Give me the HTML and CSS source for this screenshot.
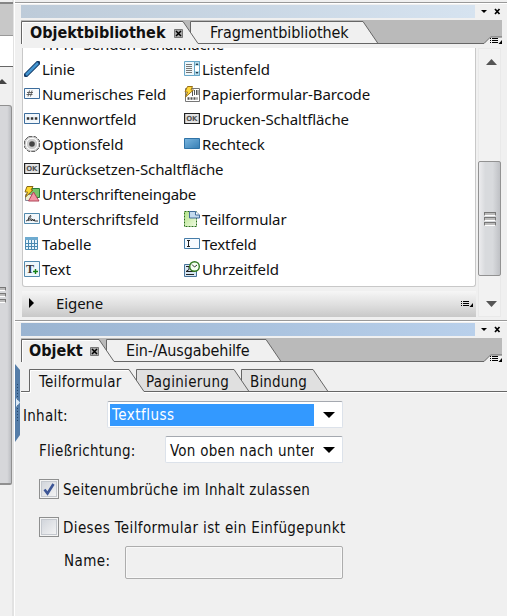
FILE: index.html
```html
<!DOCTYPE html>
<html lang="de">
<head>
<meta charset="utf-8">
<title>Objektbibliothek</title>
<link rel="stylesheet" href="styles.css">
</head>
<body>
<div class="app">
  <aside class="canvas-edge">
    <div class="edge-tab"></div>
    <div class="edge-page"></div>
    <div class="edge-arrow"><svg width="7" height="5"><path d="M-3 5L2 0L7 5Z" fill="#444"/></svg></div>
    <div class="edge-thumb"><i></i><i></i><i></i></div>
  </aside>
  <main class="dock">
    <section class="panel library">
      <header class="titlebar">
        <div class="title-fill fill-pale"></div>
        <svg class="title-tools" width="28" height="13"><path d="M6 5h6l-3 3Z"/><path d="M20 4l4.500 5M24.500 4L20 9" stroke="#000" stroke-width="1.700"/></svg>
      </header>
      <nav class="tabs">
        <svg class="tab-shape" width="481" height="24" fill="none">
          <path fill="#bababa" d="M0 0H481V24H0Z"/>
          <path fill="#f0f0f0" d="M0 1.500H162L169.500 12V1.500H342L357 23.500H463L469 17H481V24H0Z"/>
          <path stroke="#666" d="M.5 24V1.500H162L177 23.500H463L469.500 17H481M169.500 12V1.500H342L357 23.500"/>
          <path stroke="#fff" d="M1.500 24V2.500H161"/>
        </svg>
        <b class="tab-name lib-name">Objektbibliothek</b>
        <svg class="close" width="9" height="9"><path fill="#aaa" stroke="#777" d="M.5.5h8v8h-8z"/><path stroke="#000" stroke-width="1.500" d="M2 2l5 5M7 2L2 7"/></svg>
        <span class="tab-name frag-name">Fragmentbibliothek</span>
        <svg class="menu" width="12" height="7"><path stroke="#000" d="M0 1.500h1M0 3.500h1M0 5.500h1M2 1.500h6M2 3.500h6M2 5.500h6"/><path d="M12 3v4H8.500Z"/></svg>
      </nav>
      <div class="library-body">
        <div class="library-main">
          <div class="items">
            <div class="item wide"><span class="icon"></span><span>HTTP-Senden-Schaltfläche</span></div>
            <div class="item"><svg class="icon" viewBox="0 0 16 16"><path d="M2 14L14 2" stroke="#163c68" stroke-width="4.500" stroke-linecap="square"/><path d="M2 14L14 2" stroke="#4495d0" stroke-width="2.500"/></svg><span>Linie</span></div>
            <div class="item"><svg class="icon" viewBox="0 0 16 16"><path fill="#eef7fb" stroke="#67a6c8" d="M.5.5h15v14H.5z"/><path stroke="#777" d="M2 3.500h6M2 5.500h6M2 7.500h6M2 9.500h6M2 11.500h6"/><path fill="#b6ddea" stroke="#67a6c8" d="M10.500.5h5v14h-5z"/><path fill="#fff" d="M11 5h4v5h-4z"/><path d="M11.500 4L13 2l1.500 2ZM11.500 11l1.500 2 1.500-2Z" fill="#234"/></svg><span>Listenfeld</span></div>
            <div class="item"><svg class="icon" viewBox="0 0 16 16"><path fill="#f7fafc" stroke="#3d6d9c" d="M.5 2.500h15v10H.5z"/><path stroke="#555" stroke-width=".9" d="M3 6.500h6M2.500 8.500h6M5.500 4.500L4 10.500M8 4.500L6.500 10.500"/></svg><span>Numerisches Feld</span></div>
            <div class="item"><svg class="icon" viewBox="0 0 16 16"><path fill="#fff" stroke="#777" d="M1.500 2.500h14v13h-14z"/><path stroke="#555" d="M8.500 4v6M10.500 4v5M12.500 4v5M14 4v5"/><path stroke="#555" stroke-width="2.500" stroke-dasharray="2 1" d="M3.500 12.500h10"/><path fill="#ffd83b" stroke="#98701a" d="M3.500.5h5L7 4h2.500L1.500 11l2-5H1Z"/></svg><span>Papierformular-Barcode</span></div>
            <div class="item"><svg class="icon" viewBox="0 0 16 16"><path fill="#f2f7fb" stroke="#3d6d9c" d="M.5 2.500h15v10H.5z"/><path stroke="#333" stroke-width="2.500" stroke-dasharray="2.500 1.500" d="M2.800 7.500h10.500"/></svg><span>Kennwortfeld</span></div>
            <div class="item"><svg class="icon" viewBox="0 0 16 16"><path fill="#e4e4e4" stroke="#222" stroke-width="1.200" d="M.6 2.500h14.800v10H.6z"/><text x="2.200" y="10" class="ok">OK</text></svg><span>Drucken-Schaltfläche</span></div>
            <div class="item"><svg class="icon" viewBox="0 0 16 16"><path d="M4.500.7h7l3.800 3.800v7l-3.800 3.800h-7L.7 11.500v-7Z" fill="#ddd" stroke="#444" stroke-dasharray="4 1"/><circle cx="8" cy="8" r="5.700" fill="#ccc" stroke="#fff"/><circle cx="8" cy="8" r="2.800" fill="#444"/></svg><span>Optionsfeld</span></div>
            <div class="item"><svg class="icon" viewBox="0 0 16 16"><defs><linearGradient id="blue" x2="1" y2="1"><stop stop-color="#7bb6df"/><stop offset="1" stop-color="#357eb4"/></linearGradient></defs><path fill="url(#blue)" stroke="#2f73a7" d="M.5 2.500h15v10H.5z"/></svg><span>Rechteck</span></div>
            <div class="item wide"><svg class="icon" viewBox="0 0 16 16"><path fill="#e4e4e4" stroke="#222" stroke-width="1.200" d="M.6 2.500h14.800v10H.6z"/><text x="2.200" y="10" class="ok">OK</text></svg><span>Zurücksetzen-Schaltfläche</span></div>
            <div class="item wide"><svg class="icon" viewBox="0 0 16 16"><path fill="#77c46a" stroke="#287e3a" d="M5.500 2.500h10v9h-10z"/><path fill="#eec" stroke="#889" d="M1.500 8.500h7v6h-7z"/><path fill="#f295a4" stroke="#b04458" d="M9.500 6l5.500 9H4.500Z"/><path fill="#ffd82e" stroke="#876817" d="M3 .5h6L7 4h2L1.500 11l2-5H1Z"/></svg><span class="t-ueing">Unterschrifteneingabe</span></div>
            <div class="item"><svg class="icon" viewBox="0 0 16 16"><path fill="#f2f7fb" stroke="#5189ac" d="M.5 2.500h15v10H.5z"/><path fill="none" stroke="#222" stroke-width=".9" d="M2 10C5 9 8 4.500 6.500 4.500S3.500 10 4.500 10L7 7.500v2.500l2-2v2l1.500-1.500V10H14"/></svg><span>Unterschriftsfeld</span></div>
            <div class="item"><svg class="icon" viewBox="0 0 16 16"><defs><linearGradient id="leaf" x2="1" y2="1"><stop stop-color="#b4e488"/><stop offset="1" stop-color="#f0fae4"/></linearGradient></defs><path fill="url(#leaf)" stroke="#286f19" stroke-dasharray="2 1" d="M.5.5h12v15H.5z"/><path fill="#c3daee" stroke="#426d9a" d="M5.500.5h6l4 3.500v3h-10z"/><path d="M11.500.5v3.500h4" fill="#fff" stroke="#426d9a"/></svg><span>Teilformular</span></div>
            <div class="item"><svg class="icon" viewBox="0 0 16 16"><path fill="#e7f4fb" stroke="#4a8ab1" d="M1.500 1.500h12v12h-12z"/><path fill="#6eabd0" d="M1 1h13v3H1z"/><path stroke="#4a8ab1" d="M4.500 4v10M7.500 4v10M10.500 4v10M1 7.500h13M1 10.500h13"/></svg><span class="t-tab">Tabelle</span></div>
            <div class="item"><svg class="icon" viewBox="0 0 16 16"><path fill="#f5faff" stroke="#467da9" d="M.5 2.500h15v10H.5z"/><path stroke="#222" d="M3 4.500h3M3 10.500h3M4.500 4v7"/></svg><span>Textfeld</span></div>
            <div class="item"><svg class="icon" viewBox="0 0 16 16"><path fill="#eef7fb" stroke="#5289ad" d="M.5.5h15v15H.5z"/><text x="2" y="12" class="tee">T</text><path stroke="#148014" stroke-width="1.400" d="M9 10.500h5M11.500 8v5"/></svg><span class="t-tab">Text</span></div>
            <div class="item"><svg class="icon" viewBox="0 0 16 16"><path fill="#d7e6f2" stroke="#47739a" d="M.5 3.500h12v12H.5z"/><path fill="none" stroke="#222" d="M2 5.500h3v3L2 10.500h8M2 13.500h8"/><circle cx="10.500" cy="5.500" r="4.800" fill="#f4fff0" stroke="#327a20" stroke-width="1.400"/><path fill="none" stroke="#333" d="M8 3.500l2.500 2.500L13 4"/></svg><span>Uhrzeitfeld</span></div>
          </div>
          <div class="own"><svg width="6" height="10"><path d="M0 0L5 5L0 10Z"/></svg><span>Eigene</span><svg class="own-menu" width="12" height="7"><path stroke="#000" d="M0 1.500h1M0 3.500h1M0 5.500h1M2 1.500h6M2 3.500h6M2 5.500h6"/><path d="M12 3v4H8.500Z"/></svg></div>
        </div>
        <div class="scroll">
          <svg class="up" width="11" height="6"><path d="M0 6L5.500 0L11 6Z" fill="#555"/></svg>
          <div class="thumb"><i></i><i></i><i></i></div>
          <svg class="down" width="11" height="6"><path d="M0 0H11L5.500 6Z" fill="#555"/></svg>
        </div>
      </div>
    </section>
    <section class="panel object">
      <header class="titlebar">
        <div class="title-fill fill-blue"></div>
        <svg class="title-tools" width="28" height="13"><path d="M6 5h6l-3 3Z"/><path d="M20 4l4.500 5M24.500 4L20 9" stroke="#000" stroke-width="1.700"/></svg>
      </header>
      <nav class="tabs">
        <svg class="tab-shape" width="481" height="24" fill="none">
          <path fill="#bababa" d="M0 0H481V24H0Z"/>
          <path fill="#f0f0f0" d="M0 1.500H78L85.500 12V1.500H245L260 23.500H463L469 17H481V24H0Z"/>
          <path stroke="#666" d="M.5 24V1.500H78L93 23.500H463L469.500 17H481M85.500 12V1.500H245L260 23.500"/>
          <path stroke="#fff" d="M1.500 24V2.500H77"/>
        </svg>
        <b class="tab-name obj-name">Objekt</b>
        <svg class="close" width="9" height="9"><path fill="#aaa" stroke="#777" d="M.5.5h8v8h-8z"/><path stroke="#000" stroke-width="1.500" d="M2 2l5 5M7 2L2 7"/></svg>
        <span class="tab-name help-name">Ein-/Ausgabehilfe</span>
        <svg class="menu" width="12" height="7"><path stroke="#000" d="M0 1.500h1M0 3.500h1M0 5.500h1M2 1.500h6M2 3.500h6M2 5.500h6"/><path d="M12 3v4H8.500Z"/></svg>
      </nav>
      <nav class="subtabs">
        <svg class="tab-shape" width="486" height="24" fill="none">
          <path fill="#e0e0e0" d="M115.500.5H213L220.500 12V.5H292L307 22.500H123L115.500 12Z"/>
          <path stroke="#666" d="M0 22.500H8.500V.5H108L123 22.500H486M115.500 11V.5H213L228 22.500M220.500 11V.5H292L307 22.500"/>
          <path stroke="#fff" d="M0 23.500H9.500V1.500H107M123 23.500H486"/>
        </svg>
        <span class="s-teil">Teilformular</span><span class="s-pag">Paginierung</span><span class="s-bind">Bindung</span>
      </nav>
      <svg class="splitter" width="6" height="78"><path fill="#557da8" d="M0 0L5 6V71L0 78Z"/><path stroke="#23476d" stroke-dasharray="1 2" d="M2.500 20V58"/><path fill="#dceaf7" d="M1 34L5 38.500L1 43Z"/></svg>
      <form class="form">
        <div class="row content-row"><label>Inhalt:</label><div class="select big"><span class="selected">Textfluss</span><svg width="13" height="6"><path d="M0 0H12L6 6Z"/></svg></div></div>
        <div class="row flow-row"><label>Fließrichtung:</label><div class="select small"><span class="value">Von oben nach unten</span><svg width="13" height="6"><path d="M0 0H12L6 6Z"/></svg></div></div>
        <div class="check first"><span class="box"><svg width="12" height="13"><path d="M1.500 6.500l3 4L10.500 1" fill="none" stroke="#3d5696" stroke-width="2.600"/></svg></span><label>Seitenumbrüche im Inhalt zulassen</label></div>
        <div class="check"><span class="box"></span><label class="insert-label">Dieses Teilformular ist ein Einfügepunkt</label></div>
        <div class="row name-row"><label>Name:</label><div class="field"></div></div>
      </form>
    </section>
  </main>
</div>
</body>
</html>
```
FILE: styles.css
```css
* { box-sizing: border-box; }
body { margin: 0; background: #f0f0f0; color: #111; font: 15px "DejaVu Sans Condensed", "DejaVu Sans", sans-serif; font-stretch: condensed; }
svg { display: block; flex: none; }
span, label, b { white-space: nowrap; }
.app { display: flex; width: 507px; height: 616px; overflow: hidden; }
.canvas-edge { width: 15px; border-right: 1px solid #fff; background: linear-gradient(90deg, #f0f0f0 12px, #e2e2e2 12px); padding-top: 2px; }
.edge-tab { width: 13px; height: 34px; background: #c8c8c8; border-top: 2px solid #858585; border-bottom: 1px solid #999; }
.edge-page { width: 13px; height: 31px; background: #fff; border-bottom: 1px solid #666; }
.edge-arrow { height: 38px; padding-top: 12px; }
.edge-thumb { width: 12px; height: 380px; border: solid #909090; border-width: 1px 1px 2px 0; border-radius: 0 3px 2px 0; background: linear-gradient(90deg, #d6d7da 65%, #bcbec2); display: flex; flex-direction: column; justify-content: center; gap: 2px; }
.edge-thumb i, .thumb i { height: 4px; border: 1px solid #777; border-bottom-color: #fff; background: #bbb; }
.edge-thumb i { width: 6px; border-left: 0; }
.dock { width: 492px; }
.panel { border-top: 1px solid #999; box-shadow: inset 0 1px #fff; padding-left: 6px; }
.library { margin-top: 2px; height: 318px; }
.titlebar { height: 18px; padding-top: 2px; display: flex; }
.title-fill { width: 454px; height: 13px; }
.fill-pale { background: linear-gradient(90deg, #bdcbd9, #d6e3f0); }
.fill-blue { background: linear-gradient(90deg, #9ab4d1, #b9d0eb); }
.tabs, .subtabs { position: relative; height: 24px; width: 481px; display: flex; align-items: center; }
.tab-shape { position: absolute; inset: 0; }
.tabs > :not(.tab-shape), .subtabs > span { position: relative; }
.tabs { font-size: 16px; margin-top: -1px; }
.tab-name { line-height: 20px; padding-top: 1px; }
.lib-name { margin-left: 9px; width: 144px; }
.frag-name { margin-left: 27px; letter-spacing: -.06px; }
.obj-name { margin-left: 8px; width: 61px; }
.help-name { margin-left: 27px; letter-spacing: -.13px; }
.close { margin-top: 2px; }
.menu { margin-left: auto; align-self: flex-end; }
.library-body { display: flex; margin-top: 4px; gap: 3px; }
.library-main { width: 454px; margin-left: 1px; }
.items { height: 239px; overflow: hidden; border: solid #c8c8c8; border-width: 0 1px 1px; border-radius: 0 0 3px 3px; background: #fff; display: grid; grid-template-columns: 160px 1fr; grid-auto-rows: 25px; align-content: end; padding: 0 0 5px 1px; font: 15px "Noto Sans", sans-serif; letter-spacing: -.1px; }
.item { display: flex; align-items: center; gap: 2px; line-height: 24px; }
.wide { grid-column: span 2; }
.icon { width: 16px; height: 16px; flex: none; margin-top: 1px; }
.t-ueing { letter-spacing: -.25px; }
.t-tab { letter-spacing: 0; }
.ok { font: bold 7px "DejaVu Sans", sans-serif; fill: #555; }
.tee { font: bold 12px "Liberation Serif", serif; fill: #333; }
.own { height: 26px; margin-top: 4px; display: flex; align-items: center; padding: 0 3px 2px 7px; background: linear-gradient(#f6f6f6, #dedede 55%, #c8c8c8); font-family: "Noto Sans", sans-serif; letter-spacing: -.1px; }
.own > span { margin-left: 21px; }
.own-menu { margin-left: auto; }
.scroll { width: 23px; height: 269px; border: 1px solid #e9e9e9; display: flex; flex-direction: column; align-items: center; background: #f2f2f2; margin-left: -1px; }
.up { margin: 10px 0 0 3px; }
.thumb { width: 23px; height: 115px; margin-top: 96px; border: 1px solid #929292; border-radius: 2px; background: linear-gradient(90deg, #ececee, #d8dadd 30%, #d8dadd 65%, #bfc1c5); display: flex; flex-direction: column; align-items: center; justify-content: center; gap: 1px; }
.thumb i { width: 12px; }
.down { margin: 25px 0 0 3px; }
.object { position: relative; height: 296px; }
.subtabs { margin-top: 7px; font-size: 15px; letter-spacing: .3px; }
.subtabs span { padding-top: 1px; }
.s-teil { margin-left: 18px; width: 107px; }
.s-pag { width: 104px; }
.s-bind { letter-spacing: .15px; }
.splitter { position: absolute; left: 0; top: 43px; }
.form { margin: 8px 0 0; letter-spacing: .27px; }
.row { display: flex; align-items: center; }
.content-row { padding-left: 2px; height: 27px; }
.content-row label { width: 84px; padding-top: 2px; }
.select { display: flex; align-items: center; height: 27px; background: #fff; border: 1px solid #dce2ea; border-top-color: #a5a9b0; padding: 2px; border-radius: 2px; }
.select svg { margin-left: 9px; }
.big { width: 236px; }
.selected { width: 204px; height: 22px; line-height: 22px; padding-left: 2px; background: #3399ff; color: #fff; letter-spacing: .5px; }
.flow-row { margin-top: 8px; padding-left: 18px; }
.flow-row label { width: 126px; padding-top: 2px; }
.small { width: 178px; }
.value { width: 146px; overflow: hidden; padding: 2px 0 0 2px; }
.check { display: flex; align-items: center; height: 20px; margin: 18px 0 0 18px; gap: 4px; }
.check.first { margin-top: 16px; }
.check label { padding-top: 1px; }
.insert-label { letter-spacing: .38px; }
.box { width: 20px; height: 20px; border: 1px solid #8e8f8f; box-shadow: inset 0 0 0 1px #f4f4f4, inset 0 0 0 2px #c4c8ce; background: linear-gradient(135deg, #cdd1d8, #f7f7f7); display: grid; place-items: center; }
.name-row { margin: 9px 0 0 43px; }
.name-row label { width: 61px; padding-bottom: 4px; letter-spacing: .4px; }
.field { width: 218px; height: 33px; border: 1px solid #adadad; border-radius: 2px; box-shadow: inset 0 0 0 1px #f8f8f8; }
```
